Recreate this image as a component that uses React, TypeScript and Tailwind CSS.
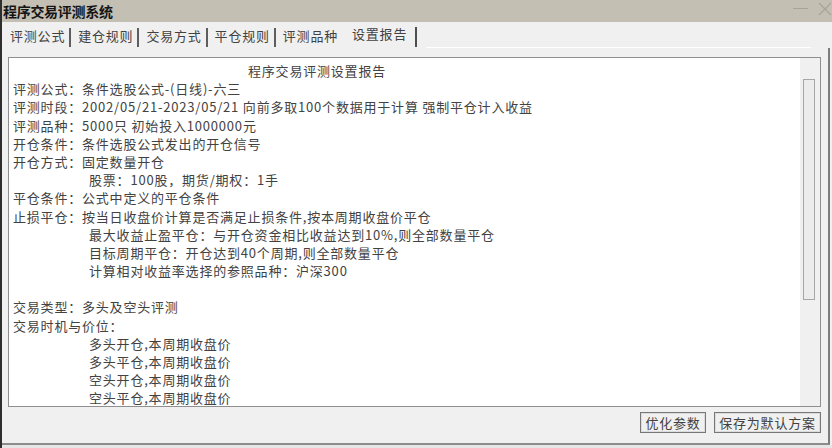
const tabs = ["评测公式", "建仓规则", "交易方式", "平仓规则", "评测品种"];

type Line = { text: string; indent?: number };

const report: Line[] = [
  { text: "程序交易评测设置报告", indent: 235 },
  { text: "评测公式：条件选股公式-(日线)-六三" },
  { text: "评测时段：2002/05/21-2023/05/21 向前多取100个数据用于计算 强制平仓计入收益" },
  { text: "评测品种：5000只 初始投入1000000元" },
  { text: "开仓条件：条件选股公式发出的开仓信号" },
  { text: "开仓方式：固定数量开仓" },
  { text: "股票：100股，期货/期权：1手", indent: 76 },
  { text: "平仓条件：公式中定义的平仓条件" },
  { text: "止损平仓：按当日收盘价计算是否满足止损条件,按本周期收盘价平仓" },
  { text: "最大收益止盈平仓：与开仓资金相比收益达到10%,则全部数量平仓", indent: 76 },
  { text: "目标周期平仓：开仓达到40个周期,则全部数量平仓", indent: 76 },
  { text: "计算相对收益率选择的参照品种：沪深300", indent: 76 },
  { text: "" },
  { text: "交易类型：多头及空头评测" },
  { text: "交易时机与价位：" },
  { text: "多头开仓,本周期收盘价", indent: 76 },
  { text: "多头平仓,本周期收盘价", indent: 76 },
  { text: "空头开仓,本周期收盘价", indent: 76 },
  { text: "空头平仓,本周期收盘价", indent: 76 },
];

export default function App() {
  return (
    <div className="flex h-[448px] w-[832px] flex-col overflow-hidden border-l-2 border-[#2e2e2e] bg-[#f0f0f0] font-['Noto_Sans_CJK_SC',sans-serif] text-[#424242]">
      {/* title bar */}
      <div className="flex h-[22px] shrink-0 items-center bg-[#c4bfb3] pl-[1px]">
        <span className="text-[14px] font-bold leading-none tracking-[-0.3px] text-[#151515]">
          程序交易评测系统
        </span>
        <div className="ml-auto flex h-full items-start">
          <svg width="15" height="22" className="mr-[10px]">
            <line x1="0" y1="8.5" x2="15" y2="8.5" stroke="#a8a498" strokeWidth="1" />
          </svg>
          <svg width="14" height="22">
            <path d="M1 3 L13 15 M13 3 L1 15" stroke="#a8a498" strokeWidth="1.2" fill="none" />
          </svg>
        </div>
      </div>

      {/* tabs */}
      <div className="flex h-[26px] shrink-0 items-end pl-[8px] text-[13px] tracking-[0.8px]">
        {tabs.map((t) => (
          <div key={t} className="mr-[7px] flex h-full items-end">
            <span className="mb-[4px] leading-[16px]">{t}</span>
            {t !== "评测品种" && (
              <span className="mb-[1px] ml-[4px] h-[19px] w-[2px] bg-[#5e5e5e]" />
            )}
          </div>
        ))}
        <div className="ml-[7px] flex h-full items-end">
          <span className="mb-[6px] leading-[16px]">设置报告</span>
          <span className="mb-[1px] ml-[8px] h-[20px] w-[2px] bg-[#4e4e4e]" />
        </div>
        <div className="ml-[9px] h-px w-[385px] bg-white" />
      </div>

      {/* page frame */}
      <div className="mr-[2px] flex flex-1 flex-col border-b-2 border-r-2 border-b-[#8c8c8c] border-r-[#7c7c7c]">
        <div className="ml-[6px] mt-[9px] flex h-[350px] w-[813px] border border-[#8f8f8f] bg-white">
          <div className="flex-1 overflow-hidden whitespace-pre pl-[4px] pt-[4px] text-[13px] leading-[18.2px] tracking-[0.8px]">
            {report.map((l, i) => (
              <div
                key={i}
                className="h-[18.2px]"
                style={l.indent ? { paddingLeft: l.indent } : undefined}
              >
                {l.text}
              </div>
            ))}
          </div>
          <div className="w-[20px] bg-[#f0f0f0]">
            <div className="ml-[3px] mt-[21px] h-[221px] w-[12px] border border-[#a6a6a6] bg-[#ececec]" />
          </div>
        </div>

        <div className="mt-[5px] flex justify-end gap-[8px] pr-[7px] text-[13px] tracking-[0.8px]">
          <button className="flex h-[21px] w-[66px] items-center justify-center border border-[#777] bg-[#f0f0f0] leading-none text-[#424242] shadow-[inset_0_0_0_1px_#dcdcdc]">
            优化参数
          </button>
          <button className="flex h-[21px] w-[107px] items-center justify-center border border-[#777] bg-[#f0f0f0] leading-none text-[#424242] shadow-[inset_0_0_0_1px_#dcdcdc]">
            保存为默认方案
          </button>
        </div>
      </div>
      <div className="h-[3px] shrink-0 bg-[#e6e6e6]" />
    </div>
  );
}
